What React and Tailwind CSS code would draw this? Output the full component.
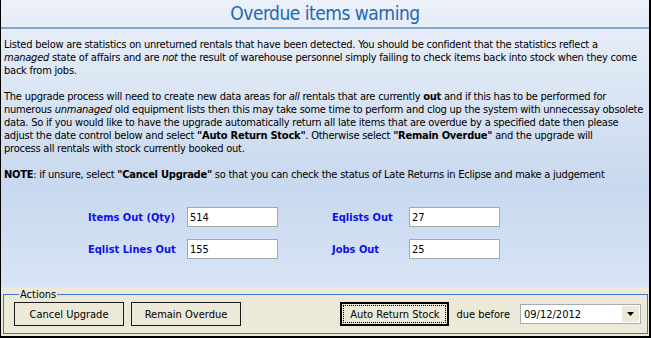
import React from "react";

const Field = ({ label, value, labelWidth }) => (
  <div className="flex items-center">
    <span className="font-bold text-[#1010e8] whitespace-nowrap" style={{ width: labelWidth }}>
      {label}
    </span>
    <div className="w-[91px] h-[20px] border border-[#a7a7a7] bg-white flex items-center pl-[2px]">
      {value}
    </div>
  </div>
);

const WinButton = ({ children, className = "" }) => (
  <button
    className={`h-[24px] border border-[#1b1b1b] bg-[#ece9d8] text-[11px] text-black flex items-center justify-center ${className}`}
  >
    {children}
  </button>
);

export default function App() {
  return (
    <div className="w-[651px] h-[338px] overflow-hidden border-l border-r-2 border-b-2 border-black flex flex-col bg-[linear-gradient(180deg,#ebf0f9_0%,#d9e4f3_30%,#c8d8ee_55%,#dfeafa_100%)] text-[11px] leading-[13px] text-black font-['DejaVu_Sans_Condensed','DejaVu_Sans',sans-serif]">
      {/* Title */}
      <div className="h-[27px] flex items-center justify-center text-[19px] tracking-[-0.5px] leading-none text-[#2268b2]">
        Overdue items warning
      </div>
      <div className="h-[2px] bg-[#7ea7d3]" />

      {/* Message */}
      <div className="pt-[9px] pl-[3px] whitespace-nowrap tracking-[-0.23px]">
        <div>
          Listed below are statistics on unreturned rentals that have been detected. You should be confident that the statistics reflect a
        </div>
        <div>
          <i>managed</i> state of affairs and are <i>not</i> the result of warehouse personnel simply failing to check items back into stock when they come
        </div>
        <div>back from jobs.</div>
        <div className="h-[13px]" />
        <div>
          The upgrade process will need to create new data areas for <i>all</i> rentals that are currently <b>out</b> and if this has to be performed for
        </div>
        <div>
          numerous <i>unmanaged</i> old equipment lists then this may take some time to perform and clog up the system with unnecessay obsolete
        </div>
        <div>
          data. So if you would like to have the upgrade automatically return all late items that are overdue by a specified date then please
        </div>
        <div>
          adjust the date control below and select <b>"Auto Return Stock"</b>. Otherwise select <b>"Remain Overdue"</b> and the upgrade will
        </div>
        <div>process all rentals with stock currently booked out.</div>
        <div className="h-[13px]" />
        <div>
          <b>NOTE</b>: if unsure, select <b>"Cancel Upgrade"</b> so that you can check the status of Late Returns in Eclipse and make a judgement
        </div>
      </div>

      {/* Statistics */}
      <div className="mt-[26px] ml-[87px] flex flex-col gap-[12px]">
        <div className="flex gap-[54px]">
          <Field label="Items Out (Qty)" value="514" labelWidth={99} />
          <Field label="Eqlists Out" value="27" labelWidth={77} />
        </div>
        <div className="flex gap-[54px]">
          <Field label="Eqlist Lines Out" value="155" labelWidth={99} />
          <Field label="Jobs Out" value="25" labelWidth={77} />
        </div>
      </div>

      <div className="flex-1" />

      {/* Actions */}
      <div className="h-[49px] bg-[#ece9d8] pt-[1px] pb-[2px] pl-[2px] pr-[1px]">
        <fieldset className="h-full border border-[#3b78d3] pl-[10px] pr-[6px] pt-[1px]">
          <legend className="ml-[5px] px-[1px] leading-[13px]">Actions</legend>
          <div className="flex items-center justify-between">
            <div className="flex gap-[7px]">
              <WinButton className="w-[110px]">Cancel Upgrade</WinButton>
              <WinButton className="w-[110px]">Remain Overdue</WinButton>
            </div>
            <div className="flex items-center">
              <button className="w-[109px] h-[24px] border-2 border-black bg-[#ece9d8] p-[1px]">
                <div className="w-full h-full border border-dotted border-black flex items-center justify-center">
                  Auto Return Stock
                </div>
              </button>
              <span className="ml-[7px] mr-[10px]">due before</span>
              <div className="w-[121px] h-[20px] border border-[#a5acb2] bg-white flex items-center p-[1px]">
                <span className="flex-1 pl-[2px]">09/12/2012</span>
                <div className="w-[17px] h-full bg-[#ece9d8] flex items-center justify-center">
                  <svg width="7" height="4" viewBox="0 0 7 4">
                    <path d="M0 0h7L3.5 4z" fill="#000" />
                  </svg>
                </div>
              </div>
            </div>
          </div>
        </fieldset>
      </div>
    </div>
  );
}
